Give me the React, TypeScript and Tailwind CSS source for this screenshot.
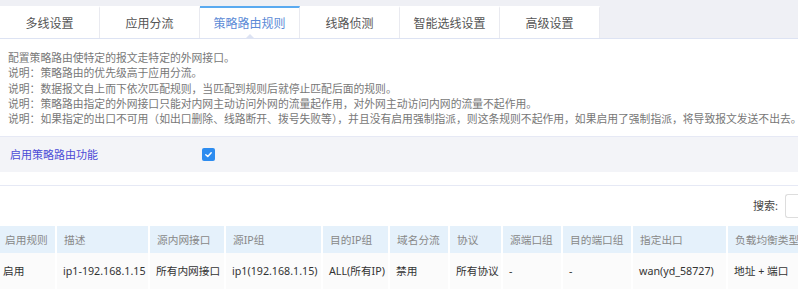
import React from 'react';

const tabs = ['多线设置', '应用分流', '策略路由规则', '线路侦测', '智能选线设置', '高级设置'];

const notes = [
  '配置策略路由使特定的报文走特定的外网接口。',
  '说明：策略路由的优先级高于应用分流。',
  '说明：数据报文自上而下依次匹配规则，当匹配到规则后就停止匹配后面的规则。',
  '说明：策略路由指定的外网接口只能对内网主动访问外网的流量起作用，对外网主动访问内网的流量不起作用。',
  '说明：如果指定的出口不可用（如出口删除、线路断开、拨号失败等），并且没有启用强制指派，则这条规则不起作用，如果启用了强制指派，将导致报文发送不出去。',
];

// column widths include the 2px white separator
const columns: { title: string; w: string; value: string }[] = [
  { title: '启用规则', w: 'w-[57px]', value: '启用' },
  { title: '描述', w: 'w-[93px]', value: 'ip1-192.168.1.15' },
  { title: '源内网接口', w: 'w-[76px]', value: '所有内网接口' },
  { title: '源IP组', w: 'w-[97px]', value: 'ip1(192.168.1.15)' },
  { title: '目的IP组', w: 'w-[67px]', value: 'ALL(所有IP)' },
  { title: '域名分流', w: 'w-[60px]', value: '禁用' },
  { title: '协议', w: 'w-[53px]', value: '所有协议' },
  { title: '源端口组', w: 'w-[60px]', value: '-' },
  { title: '目的端口组', w: 'w-[70px]', value: '-' },
  { title: '指定出口', w: 'w-[95px]', value: 'wan(yd_58727)' },
  { title: '负载均衡类型', w: 'w-[120px]', value: '地址 + 端口' },
];

export default function App() {
  return (
    <div
      className="w-[798px] h-[290px] overflow-hidden bg-white"
      style={{ fontFamily: '"Noto Sans", "Noto Sans CJK SC", sans-serif' }}
    >
      {/* ── Tabs ─────────────────────────────────────────── */}
      <div className="bg-[#eff0f5] pt-[6px] border-b border-[#dde3f3] flex">
        {tabs.map((t, i) => {
          const active = i === 2;
          return (
            <div
              key={t}
              className={`relative w-[100px] h-[32px] pt-[2px] flex items-center justify-center text-[12px] bg-white border-r border-[#e9eaf0] ${
                active ? 'text-[#5b8ad6] border-t-2 border-t-[#5aaaf0]' : 'text-[#555] border-t-2 border-t-white'
              }`}
            >
              {t}
              {active && (
                <span className="absolute bottom-[-1px] left-1/2 -translate-x-1/2 w-0 h-0 border-l-[5px] border-r-[5px] border-b-[5px] border-l-transparent border-r-transparent border-b-[#dde3f3]" />
              )}
            </div>
          );
        })}
      </div>

      {/* ── Notes ────────────────────────────────────────── */}
      <div className="pl-[8px] pt-[11px] pb-[10px] text-[10.8px] leading-[15.3px] text-[#777] whitespace-nowrap">
        {notes.map(n => (
          <div key={n}>{n}</div>
        ))}
      </div>

      {/* ── Enable switch ────────────────────────────────── */}
      <div className="border-t border-[#e6e9f5] bg-[#f3f4f8] h-[36px] flex items-center">
        <span className="pl-[10px] w-[202px] text-[11px] text-[#4b4bd6]">启用策略路由功能</span>
        <span className="w-[13px] h-[13px] rounded-[2px] bg-[#2d8cf0] flex items-center justify-center">
          <svg width="9" height="9" viewBox="0 0 10 10">
            <path d="M2 5.2 L4.2 7.2 L8 3" fill="none" stroke="white" strokeWidth="1.6" strokeLinecap="round" strokeLinejoin="round" />
          </svg>
        </span>
      </div>

      {/* ── Search ───────────────────────────────────────── */}
      <div className="mt-[13px] border-t border-[#e6e9f5] h-[41px] flex items-center justify-end">
        <span className="text-[11px] text-[#444] mr-[7px]">搜索:</span>
        <div className="w-[30px] h-[24px] border border-[#ddd] rounded-l-[3px] border-r-0 mr-[-17px]" />
      </div>

      {/* ── Table ────────────────────────────────────────── */}
      <div className="flex w-[1000px]">
        {columns.map((c, i) => (
          <div key={c.title} className={`${c.w} shrink-0 border-r-2 border-white`}>
            <div className={`h-[27px] bg-[#e5f1fb] flex items-center text-[10.7px] text-[#888] ${i === 0 ? 'pl-[5px]' : 'pl-[7px]'}`}>
              {c.title}
            </div>
            <div className={`h-[36px] bg-[#fbfbfb] flex items-center text-[10.7px] text-[#333] whitespace-nowrap ${i === 0 ? 'pl-[3px]' : 'pl-[6px]'}`}>
              {c.value}
            </div>
          </div>
        ))}
      </div>
    </div>
  );
}
